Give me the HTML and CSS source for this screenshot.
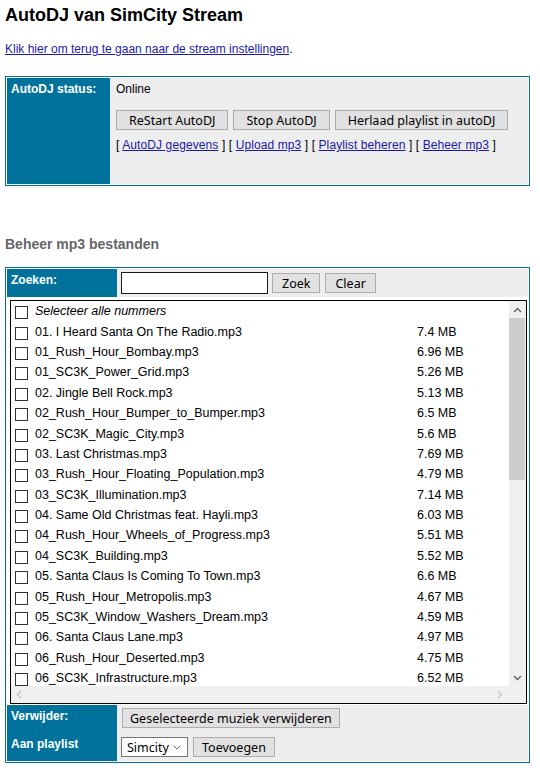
FILE: index.html
```html
<!DOCTYPE html>
<html lang="nl">
<head>
    <meta charset="UTF-8">
    <title>AutoDJ van SimCity Stream</title>
    <link rel="stylesheet" href="styles.css">
</head>
<body>
    <h1>AutoDJ van SimCity Stream</h1>
    <p class="back"><a href="#">Klik hier om terug te gaan naar de stream instellingen</a>.</p>

    <div class="panel status">
        <div class="label">AutoDJ status:</div>
        <div class="cell">
            <div>Online</div>
            <div class="actions">
                <button>ReStart AutoDJ</button>
                <button>Stop AutoDJ</button>
                <button>Herlaad playlist in autoDJ</button>
            </div>
            <div class="links">
                [ <a href="#">AutoDJ gegevens</a> ] [ <a href="#">Upload mp3</a> ] [ <a href="#">Playlist beheren</a> ] [ <a href="#">Beheer mp3</a> ]
            </div>
        </div>
    </div>

    <h2>Beheer mp3 bestanden</h2>

    <form class="panel files">
        <div class="label">Zoeken:</div>
        <div class="cell search">
            <input type="text" class="query">
            <button type="button">Zoek</button>
            <button type="button">Clear</button>
        </div>

        <div class="listcell">
            <div class="listbox">
                <div class="rows">
                    <label class="row all"><input type="checkbox"><span>Selecteer alle nummers</span></label>
                    <label class="row"><input type="checkbox"><span>01. I Heard Santa On The Radio.mp3</span><span>7.4 MB</span></label>
                    <label class="row"><input type="checkbox"><span>01_Rush_Hour_Bombay.mp3</span><span>6.96 MB</span></label>
                    <label class="row"><input type="checkbox"><span>01_SC3K_Power_Grid.mp3</span><span>5.26 MB</span></label>
                    <label class="row"><input type="checkbox"><span>02. Jingle Bell Rock.mp3</span><span>5.13 MB</span></label>
                    <label class="row"><input type="checkbox"><span>02_Rush_Hour_Bumper_to_Bumper.mp3</span><span>6.5 MB</span></label>
                    <label class="row"><input type="checkbox"><span>02_SC3K_Magic_City.mp3</span><span>5.6 MB</span></label>
                    <label class="row"><input type="checkbox"><span>03. Last Christmas.mp3</span><span>7.69 MB</span></label>
                    <label class="row"><input type="checkbox"><span>03_Rush_Hour_Floating_Population.mp3</span><span>4.79 MB</span></label>
                    <label class="row"><input type="checkbox"><span>03_SC3K_Illumination.mp3</span><span>7.14 MB</span></label>
                    <label class="row"><input type="checkbox"><span>04. Same Old Christmas feat. Hayli.mp3</span><span>6.03 MB</span></label>
                    <label class="row"><input type="checkbox"><span>04_Rush_Hour_Wheels_of_Progress.mp3</span><span>5.51 MB</span></label>
                    <label class="row"><input type="checkbox"><span>04_SC3K_Building.mp3</span><span>5.52 MB</span></label>
                    <label class="row"><input type="checkbox"><span>05. Santa Claus Is Coming To Town.mp3</span><span>6.6 MB</span></label>
                    <label class="row"><input type="checkbox"><span>05_Rush_Hour_Metropolis.mp3</span><span>4.67 MB</span></label>
                    <label class="row"><input type="checkbox"><span>05_SC3K_Window_Washers_Dream.mp3</span><span>4.59 MB</span></label>
                    <label class="row"><input type="checkbox"><span>06. Santa Claus Lane.mp3</span><span>4.97 MB</span></label>
                    <label class="row"><input type="checkbox"><span>06_Rush_Hour_Deserted.mp3</span><span>4.75 MB</span></label>
                    <label class="row"><input type="checkbox"><span>06_SC3K_Infrastructure.mp3</span><span>6.52 MB</span></label>
                </div>
                <!-- scrollbars, drawn by hand -->
                <div class="vbar">
                    <div class="arrow"><svg width="9" height="6" viewBox="0 0 9 6"><polyline points="1,5 4.5,1.5 8,5" fill="none" stroke="#606060" stroke-width="1.4"/></svg></div>
                    <div class="thumb"></div>
                    <div class="arrow down"><svg width="9" height="6" viewBox="0 0 9 6"><polyline points="1,1 4.5,4.5 8,1" fill="none" stroke="#606060" stroke-width="1.4"/></svg></div>
                </div>
                <div class="hbar">
                    <svg width="6" height="9" viewBox="0 0 6 9"><polyline points="5,1 1.5,4.5 5,8" fill="none" stroke="#c4c4c4" stroke-width="1.4"/></svg>
                    <svg width="6" height="9" viewBox="0 0 6 9"><polyline points="1,1 4.5,4.5 1,8" fill="none" stroke="#c4c4c4" stroke-width="1.4"/></svg>
                </div>
                <div class="corner"></div>
            </div>
        </div>

        <div class="label">Verwijder:</div>
        <div class="cell tight">
            <button type="button">Geselecteerde muziek verwijderen</button>
        </div>

        <div class="label second">Aan playlist</div>
        <div class="cell tight last">
            <span class="select">
                <select>
                    <option>Simcity</option>
                </select>
                <svg width="8" height="5" viewBox="0 0 8 5"><polyline points="0.5,0.5 4,4 7.5,0.5" fill="none" stroke="#666" stroke-width="1"/></svg>
            </span>
            <button type="button">Toevoegen</button>
        </div>
    </form>
</body>
</html>
```

FILE: styles.css
```css
body { margin: 0; padding: 0 5px; font-family: "Liberation Sans", Arial, sans-serif; font-size: 12px; line-height: 14px; color: #000; background: #fff; }
h1 { font-size: 18px; line-height: 21px; margin: 5px 0 0; }
h2 { font-size: 14px; line-height: 16px; color: #666; margin: 50px 0 15px; }
a { color: #1a1aa6; }
.back { margin: 16px 0 0; }

button { font-family: "Noto Sans", "Open Sans", sans-serif; font-size: 12.5px; height: 20px; line-height: 17px; padding: 0 12px; margin: 0; background: #e1e1e1; color: #000; border: 1px solid #adadad; border-radius: 0; }

/* blue label column + grey cells */
.panel { width: 525px; box-sizing: border-box; border: 1px solid #00729c; padding: 1px; display: grid; }
.label { background: #00729c; color: #fff; font-weight: bold; padding: 4px 4px; }
.cell { background: #eee; padding: 4px 6px; }

.status { grid-template-columns: 103px 1fr; height: 110px; margin-top: 20px; }
.actions { display: flex; gap: 5px; margin-top: 14px; }
.links { margin-top: 8px; letter-spacing: 0.1px; }

.files { grid-template-columns: 110px 1fr; }
.search { display: flex; align-items: center; padding: 3px 4px; }
.search button { margin-left: 4px; padding: 0 9px; }
.search button + button { margin-left: 5px; }
.query { width: 147px; height: 22px; box-sizing: border-box; border: 1px solid #1a1a1a; margin: 0; padding: 1px 3px; font: 12px "Liberation Sans", Arial, sans-serif; }

.listcell { grid-column: 1 / -1; background: #fff; padding: 3px 1px 1px 3px; }
.listbox { height: 404px; box-sizing: border-box; border: 1px solid #000; background: #f0f0f0; display: grid; grid-template-columns: 1fr 17px; grid-template-rows: 1fr 17px; }
.rows { background: #fff; overflow: hidden; }
.row { display: grid; grid-template-columns: 24px 382px 1fr; height: 20.4px; align-items: center; white-space: nowrap; font-size: 12.5px; }
.row input { appearance: none; -webkit-appearance: none; width: 13px; height: 13px; margin: 3px 0 0 4px; border: 1px solid #333; background: #fff; }
.row.all span { font-style: italic; }

.vbar { display: flex; flex-direction: column; }
.arrow { height: 17px; display: flex; align-items: center; justify-content: center; }
.thumb { height: 162px; margin: 0 1px 0 0; background: #cdcdcd; }
.arrow.down { margin-top: auto; }
.hbar { display: flex; align-items: center; justify-content: space-between; padding: 0 6px 0 5px; }

/* bottom action rows */
.tight { display: flex; align-items: flex-start; padding: 3px 4px 4px; }
.tight button { margin-left: 1px; padding: 0 7px; }
.label.second { padding-top: 5px; }
.last { padding: 5px 4px 4px; }
.last button { margin-left: 5px; padding: 0 8px; }

.select { position: relative; display: inline-block; }
.select select { appearance: none; -webkit-appearance: none; width: 67px; height: 20px; margin: 0; padding: 0 0 0 5px; border: 1px solid #767676; border-radius: 0; background: #fff; color: #000; font-family: "Noto Sans", "Open Sans", sans-serif; font-size: 12.5px; }
.select svg { position: absolute; right: 7px; top: 8px; }
```
